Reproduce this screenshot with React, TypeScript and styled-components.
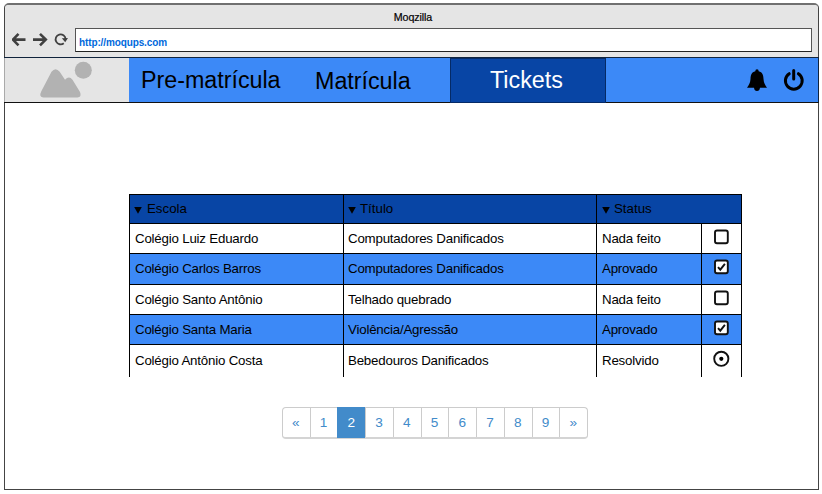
import React from "react";
import styled, { createGlobalStyle, css } from "styled-components";

const Global = createGlobalStyle`
  * { box-sizing: border-box; }
  body { margin: 0; background: #fff; font-family: "Liberation Sans", Arial, sans-serif; color: #000; }
`;

const Page = styled.div`
  width: 822px;
  height: 494px;
  padding: 3px 3px 4px 4px;
`;
const Window = styled.main`
  width: 815px;
  height: 487px;
  display: flex;
  flex-direction: column;
  border: 1px solid #444;
  border-top: 2px solid #707070;
  border-radius: 5px 5px 0 0;
  background: #fff;
`;
const Chrome = styled.header`
  height: 52px;
  flex: none;
  background: #e5e5e5;
  border-radius: 4px 4px 0 0;
`;
const WindowTitle = styled.div`
  height: 23px;
  padding: 6px 0 0 3px;
  text-align: center;
  font-size: 10.67px;
  letter-spacing: -0.1px;
  line-height: 13px;
  -webkit-text-stroke: 0.2px #000;
`;
const AddressBar = styled.div`
  display: flex;
  padding: 0 6px 0 7px;
`;
const Controls = styled.svg`
  width: 62px;
  height: 25px;
  flex: none;
  fill: none;
  stroke: #404040;
  stroke-width: 2.6;
`;
const Address = styled.div`
  flex: 1;
  height: 24px;
  margin-left: 1px;
  padding: 7px 0 0 3px;
  border: 1px solid #555;
  border-bottom-color: #222;
  background: #fff;
  color: #0069dc;
  font-size: 10px;
  font-weight: bold;
  letter-spacing: -0.12px;
  line-height: 14px;
`;
const Nav = styled.nav`
  height: 46px;
  flex: none;
  display: flex;
  margin: 0 -1px;
  background: #3c89f7;
  border: 1px solid #10233c;
  border-bottom-color: #111;
  border-left-width: 0;
`;
const Logo = styled.div`
  width: 125px;
  height: 44px;
  background: #e5e5e5;
  border-left: 1px solid #aaa;
  svg { display: block; fill: #b2b2b2; }
`;
const NavItem = styled.a<{ $width: number; $pad: number; $top?: number; $active?: boolean }>`
  width: ${(p) => p.$width}px;
  height: 44px;
  padding: ${(p) => p.$top ?? 9}px 0 0 ${(p) => p.$pad}px;
  font-size: 23.3px;
  letter-spacing: -0.02px;
  line-height: 27px;
  white-space: nowrap;
  ${(p) =>
    p.$active &&
    css`
      height: 45px;
      background: #0845a5;
      border: 1px solid #052a66;
      color: #fff;
    `}
`;
const Actions = styled.div`
  flex: 1;
  svg { display: block; }
`;
const Content = styled.section`
  display: flex;
  flex-direction: column;
  padding: 91px 0 0 124px;
`;
const Table = styled.div`
  width: 613px;
  border: 1px solid #000;
  border-bottom: 0;
  font-size: 13.3px;
  letter-spacing: -0.2px;
  line-height: 15px;
`;
const Row = styled.div<{ $height: number; $tone?: "head" | "blue" }>`
  display: grid;
  grid-template-columns: ${(p) => (p.$tone === "head" ? "213px 253px 145px" : "213px 253px 105px 40px")};
  height: ${(p) => p.$height}px;
  background: ${(p) => (p.$tone === "head" ? "#0845a5" : p.$tone === "blue" ? "#3c89f7" : "#fff")};
  & + & { border-top: 1px solid #000; }
`;
const Cell = styled.div<{ $pad?: number; $top?: number }>`
  padding: ${(p) => p.$top ?? 7}px 0 0 ${(p) => p.$pad ?? 5}px;
  white-space: nowrap;
  & + & { border-left: 1px solid #000; }
`;
const HeadCell = styled(Cell)<{ $gap?: number }>`
  display: flex;
  gap: ${(p) => p.$gap ?? 4}px;
  letter-spacing: 0;
  svg { width: 8px; height: 8px; margin-top: 5px; }
`;
const MarkCell = styled.div`
  border-left: 1px solid #000;
  padding: 4px 0 0 11px;
  svg { display: block; }
`;
const Pagination = styled.nav`
  display: flex;
  width: 306px;
  height: 32px;
  margin: 30px 0 0 153px;
  border: 1px solid #ccc;
  border-bottom-width: 2px;
  border-radius: 4px;
  border-bottom-color: #d4d4d4;
`;
const PageLink = styled.a<{ $active?: boolean }>`
  flex: 1;
  padding: 7px 1px 0 0;
  text-align: center;
  font-size: 13.6px;
  line-height: 16px;
  color: #428bca;
  & + & { border-left: 1px solid #ccc; }
  ${(p) =>
    p.$active &&
    css`
      && { margin: -1px 0 -1px; padding-top: 8px; background: #428bca; color: #fff; border-color: #428bca; }
    `}
`;

type Mark = "empty" | "checked" | "radio";
const MarkIcon = ({ kind }: { kind: Mark }) => (
  <svg width="17" height="18" viewBox="0 0 17 18" fill="#fff" stroke="#111" strokeWidth="1.9">
    {kind === "radio" ? (
      <>
        <circle cx="8.3" cy="9.8" r="7.1" />
        <circle cx="8.3" cy="9.8" r="2.1" fill="#000" stroke="none" />
      </>
    ) : (
      <>
        <rect x="2" y="2.5" width="12.8" height="12.8" rx="2" />
        {kind === "checked" && <path d="M5 9.1 7.3 11.7 11.9 5.9" fill="none" />}
      </>
    )}
  </svg>
);
const SortArrow = () => (
  <svg viewBox="0 0 8 8"><path d="M.2 1h7.6L4 7.8z" /></svg>
);

const rows: { school: string; title: string; status: string; mark: Mark; height: number; top?: number }[] = [
  { school: "Colégio Luiz Eduardo", title: "Computadores Danificados", status: "Nada feito", mark: "empty", height: 30 },
  { school: "Colégio Carlos Barros", title: "Computadores Danificados", status: "Aprovado", mark: "checked", height: 31 },
  { school: "Colégio Santo Antônio", title: "Telhado quebrado", status: "Nada feito", mark: "empty", height: 30 },
  { school: "Colégio Santa Maria", title: "Violência/Agressão", status: "Aprovado", mark: "checked", height: 30 },
  { school: "Colégio Antônio Costa", title: "Bebedouros Danificados", status: "Resolvido", mark: "radio", height: 33, top: 8 },
];

export default function App() {
  return (
    <Page>
      <Global />
      <Window>
        <Chrome>
          <WindowTitle>Moqzilla</WindowTitle>
          <AddressBar>
            <Controls viewBox="12 28 62 25">
              <path d="M25.5 39.6H13.5M18.5 33.8 12.9 39.6 18.5 45.4" />
              <path d="M33 39.6H45M40 33.8 45.8 39.6 40 45.4" />
              <path d="M63.8 43.2A5 5 0 1 1 65.6 39" strokeWidth="1.8" />
              <path d="M61.9 38.2 68 37.9 65.2 42.2Z" fill="#404040" stroke="none" />
            </Controls>
            <Address>http://moqups.com</Address>
          </AddressBar>
        </Chrome>
        <Nav>
          <Logo>
            <svg width="124" height="44" viewBox="5 58 124 44">
              <circle cx="83.3" cy="70.3" r="8.5" />
              <path d="M43.5 97.5Q38.5 97 41.2 91.5L51.5 71.8Q55.5 66.5 59.7 71.8L65 79.8Q69 75 72.5 79.8L80 92Q82 97 77.5 97.5Z" />
            </svg>
          </Logo>
          <NavItem $width={174} $pad={12}>Pre-matrícula</NavItem>
          <NavItem $width={147} $pad={12} $top={10}>Matrícula</NavItem>
          <NavItem $width={156} $pad={39} $top={8} $active>Tickets</NavItem>
          <Actions>
            <svg width="212" height="44" viewBox="606 58 212 44">
              <path d="M757 69.3Q758.7 69.3 758.7 71.2C762.5 72.2 763.3 75 763.5 79C763.8 83 765 85 767 87.8H760C759.7 90 758.7 91 757 91S754.3 90 754 87.8H747C749 85 750.2 83 750.5 79C750.7 75 751.5 72.2 755.3 71.2Q755.3 69.3 757 69.3Z" />
              <path d="M789.2 73.7A8.4 8.4 0 1 0 798.4 73.7M793.7 70.5V79" fill="none" stroke="#000" strokeWidth="3" strokeLinecap="round" />
            </svg>
          </Actions>
        </Nav>
        <Content>
          <Table>
            <Row $height={28} $tone="head">
              <HeadCell $top={6} $pad={4} $gap={5}><SortArrow />Escola</HeadCell>
              <HeadCell $top={6} $pad={4}><SortArrow />Título</HeadCell>
              <HeadCell $top={6} $pad={5}><SortArrow />Status</HeadCell>
            </Row>
            {rows.map((r) => (
              <Row key={r.school} $height={r.height} $tone={r.mark === "checked" ? "blue" : undefined}>
                <Cell $top={r.top}>{r.school}</Cell>
                <Cell $top={r.top} $pad={4}>{r.title}</Cell>
                <Cell $top={r.top}>{r.status}</Cell>
                <MarkCell><MarkIcon kind={r.mark} /></MarkCell>
              </Row>
            ))}
          </Table>
          <Pagination>
            {["«", "1", "2", "3", "4", "5", "6", "7", "8", "9", "»"].map((p) => (
              <PageLink key={p} $active={p === "2"}>{p}</PageLink>
            ))}
          </Pagination>
        </Content>
      </Window>
    </Page>
  );
}
